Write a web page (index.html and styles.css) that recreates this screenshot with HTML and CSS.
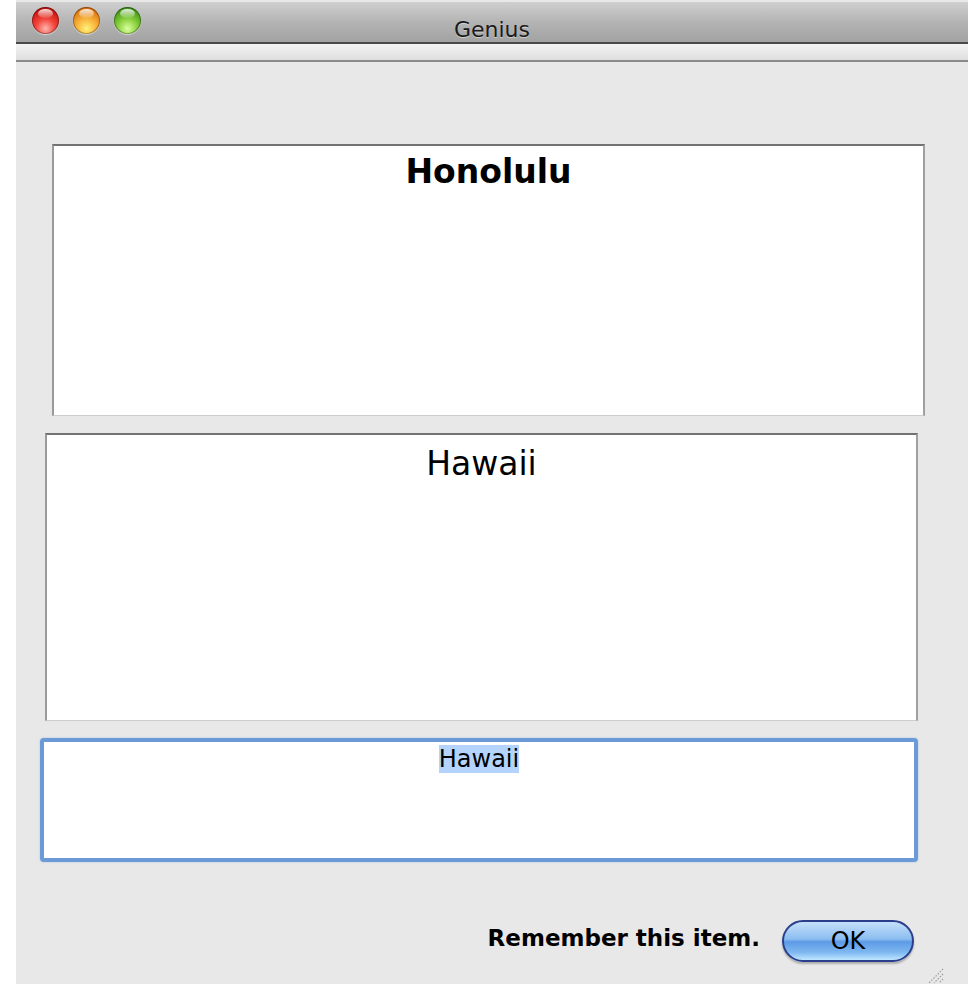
FILE: index.html
```html
<!DOCTYPE html>
<html>
<head>
<meta charset="utf-8">
<title>Genius</title>
<link rel="stylesheet" href="styles.css">
</head>
<body>
<div class="window">
  <div class="titlebar">
    <div class="lights">
      <span class="light red"></span>
      <span class="light orange"></span>
      <span class="light green"></span>
    </div>
    <div class="title">Genius</div>
  </div>
  <div class="toolbar"></div>
  <div class="content">
    <div class="field field-one"><span class="big bold">Honolulu</span></div>
    <div class="field field-two"><span class="big">Hawaii</span></div>
    <div class="field field-three"><span class="small sel">Hawaii</span></div>
    <div class="footer">
      <span class="remember">Remember this item.</span>
      <button class="ok">OK</button>
    </div>
  </div>
  <svg class="grip" width="18" height="18" viewBox="0 0 18 18">
    <path d="M17 3 L3 17 M17 8 L8 17 M17 13 L13 17" stroke="#9a9a9a" stroke-width="1.2" stroke-dasharray="1.5 1.5"/>
  </svg>
</div>
</body>
</html>
```

FILE: styles.css
```css
html, body {
  margin: 0;
  padding: 0;
  background: #ffffff;
}
body {
  font-family: "DejaVu Sans", "Liberation Sans", sans-serif;
  color: #000;
}
.window {
  position: relative;
  margin-left: 16px;
  width: 952px;
  height: 984px;
  background: #e8e8e8;
  display: flex;
  flex-direction: column;
}
.titlebar {
  height: 40px;
  margin-top: 2px;
  background: linear-gradient(#cfcfcf, #b4b4b4 50%, #a2a2a2);
  border-bottom: 2px solid #4a4a4a;
  display: flex;
  align-items: center;
  position: relative;
}
.lights {
  display: flex;
  gap: 14px;
  padding-left: 16px;
  margin-top: -4px;
}
.light {
  position: relative;
  width: 27px;
  height: 27px;
  border-radius: 50%;
  display: block;
  box-shadow: 0 1px 1px rgba(255,255,255,0.5), inset 0 0 0 1px rgba(0,0,0,0.3);
}
.red {
  background: radial-gradient(circle at 50% 80%, #ffb6ae 0%, #f2463c 38%, #c8160f 75%, #8a0a06 100%);
}
.orange {
  background: radial-gradient(circle at 50% 80%, #fff27a 0%, #f8b23a 40%, #d8700f 78%, #9a4a08 100%);
}
.green {
  background: radial-gradient(circle at 50% 80%, #dcff9e 0%, #88cf3c 40%, #42921a 78%, #266008 100%);
}
.light::before {
  content: "";
  position: absolute;
  left: 6px;
  top: 2px;
  width: 15px;
  height: 9px;
  border-radius: 50%;
  background: linear-gradient(rgba(255,255,255,0.85), rgba(255,255,255,0.1));
}
.title {
  position: absolute;
  left: 0;
  right: 0;
  top: 15px;
  text-align: center;
  font-size: 22px;
  color: #1a1a1a;
  text-shadow: 0 1px 0 rgba(255,255,255,0.45);
}
.toolbar {
  height: 16px;
  background: linear-gradient(#f4f4f4, #dedede);
  border-bottom: 2px solid #8a8a8a;
}
.content {
  flex: 1;
  display: flex;
  flex-direction: column;
  padding-top: 82px;
}
.field {
  background: #ffffff;
  border-top: 2px solid #727272;
  border-left: 2px solid #9a9a9a;
  border-right: 2px solid #a0a0a0;
  border-bottom: 1px solid #cdcdcd;
  text-align: center;
  box-sizing: border-box;
}
.field-one {
  margin-left: 36px;
  margin-right: 43px;
  height: 272px;
  padding-top: 6px;
}
.field-two {
  margin-left: 29px;
  margin-right: 50px;
  margin-top: 17px;
  height: 288px;
  padding-top: 9px;
}
.field-three {
  margin-left: 24px;
  margin-right: 50px;
  margin-top: 17px;
  height: 124px;
  border: 4px solid #6c9ad6;
  border-radius: 4px;
  box-shadow: 0 0 2px #9cbde6;
  padding-top: 3px;
}
.big {
  font-size: 33px;
}
.bold {
  font-weight: bold;
}
.small {
  font-size: 24px;
}
.sel {
  background: #b5d4fd;
}
.footer {
  display: flex;
  justify-content: flex-end;
  align-items: center;
  gap: 22px;
  padding-right: 54px;
  margin-top: 58px;
}
.remember {
  font-weight: bold;
  font-size: 23px;
  margin-top: -6px;
}
.ok {
  width: 132px;
  height: 42px;
  border-radius: 21px;
  border: 2px solid #2b3e8c;
  background: linear-gradient(#c5e0fb 0%, #8bbdf0 45%, #5c9ae6 52%, #7fb8f0 80%, #bfe6ff 100%);
  font-family: "DejaVu Sans", sans-serif;
  font-size: 24px;
  color: #000;
  padding: 0;
  box-shadow: 0 2px 2px rgba(0,0,0,0.25);
}
.grip {
  position: absolute;
  right: 24px;
  bottom: 0;
}
```
